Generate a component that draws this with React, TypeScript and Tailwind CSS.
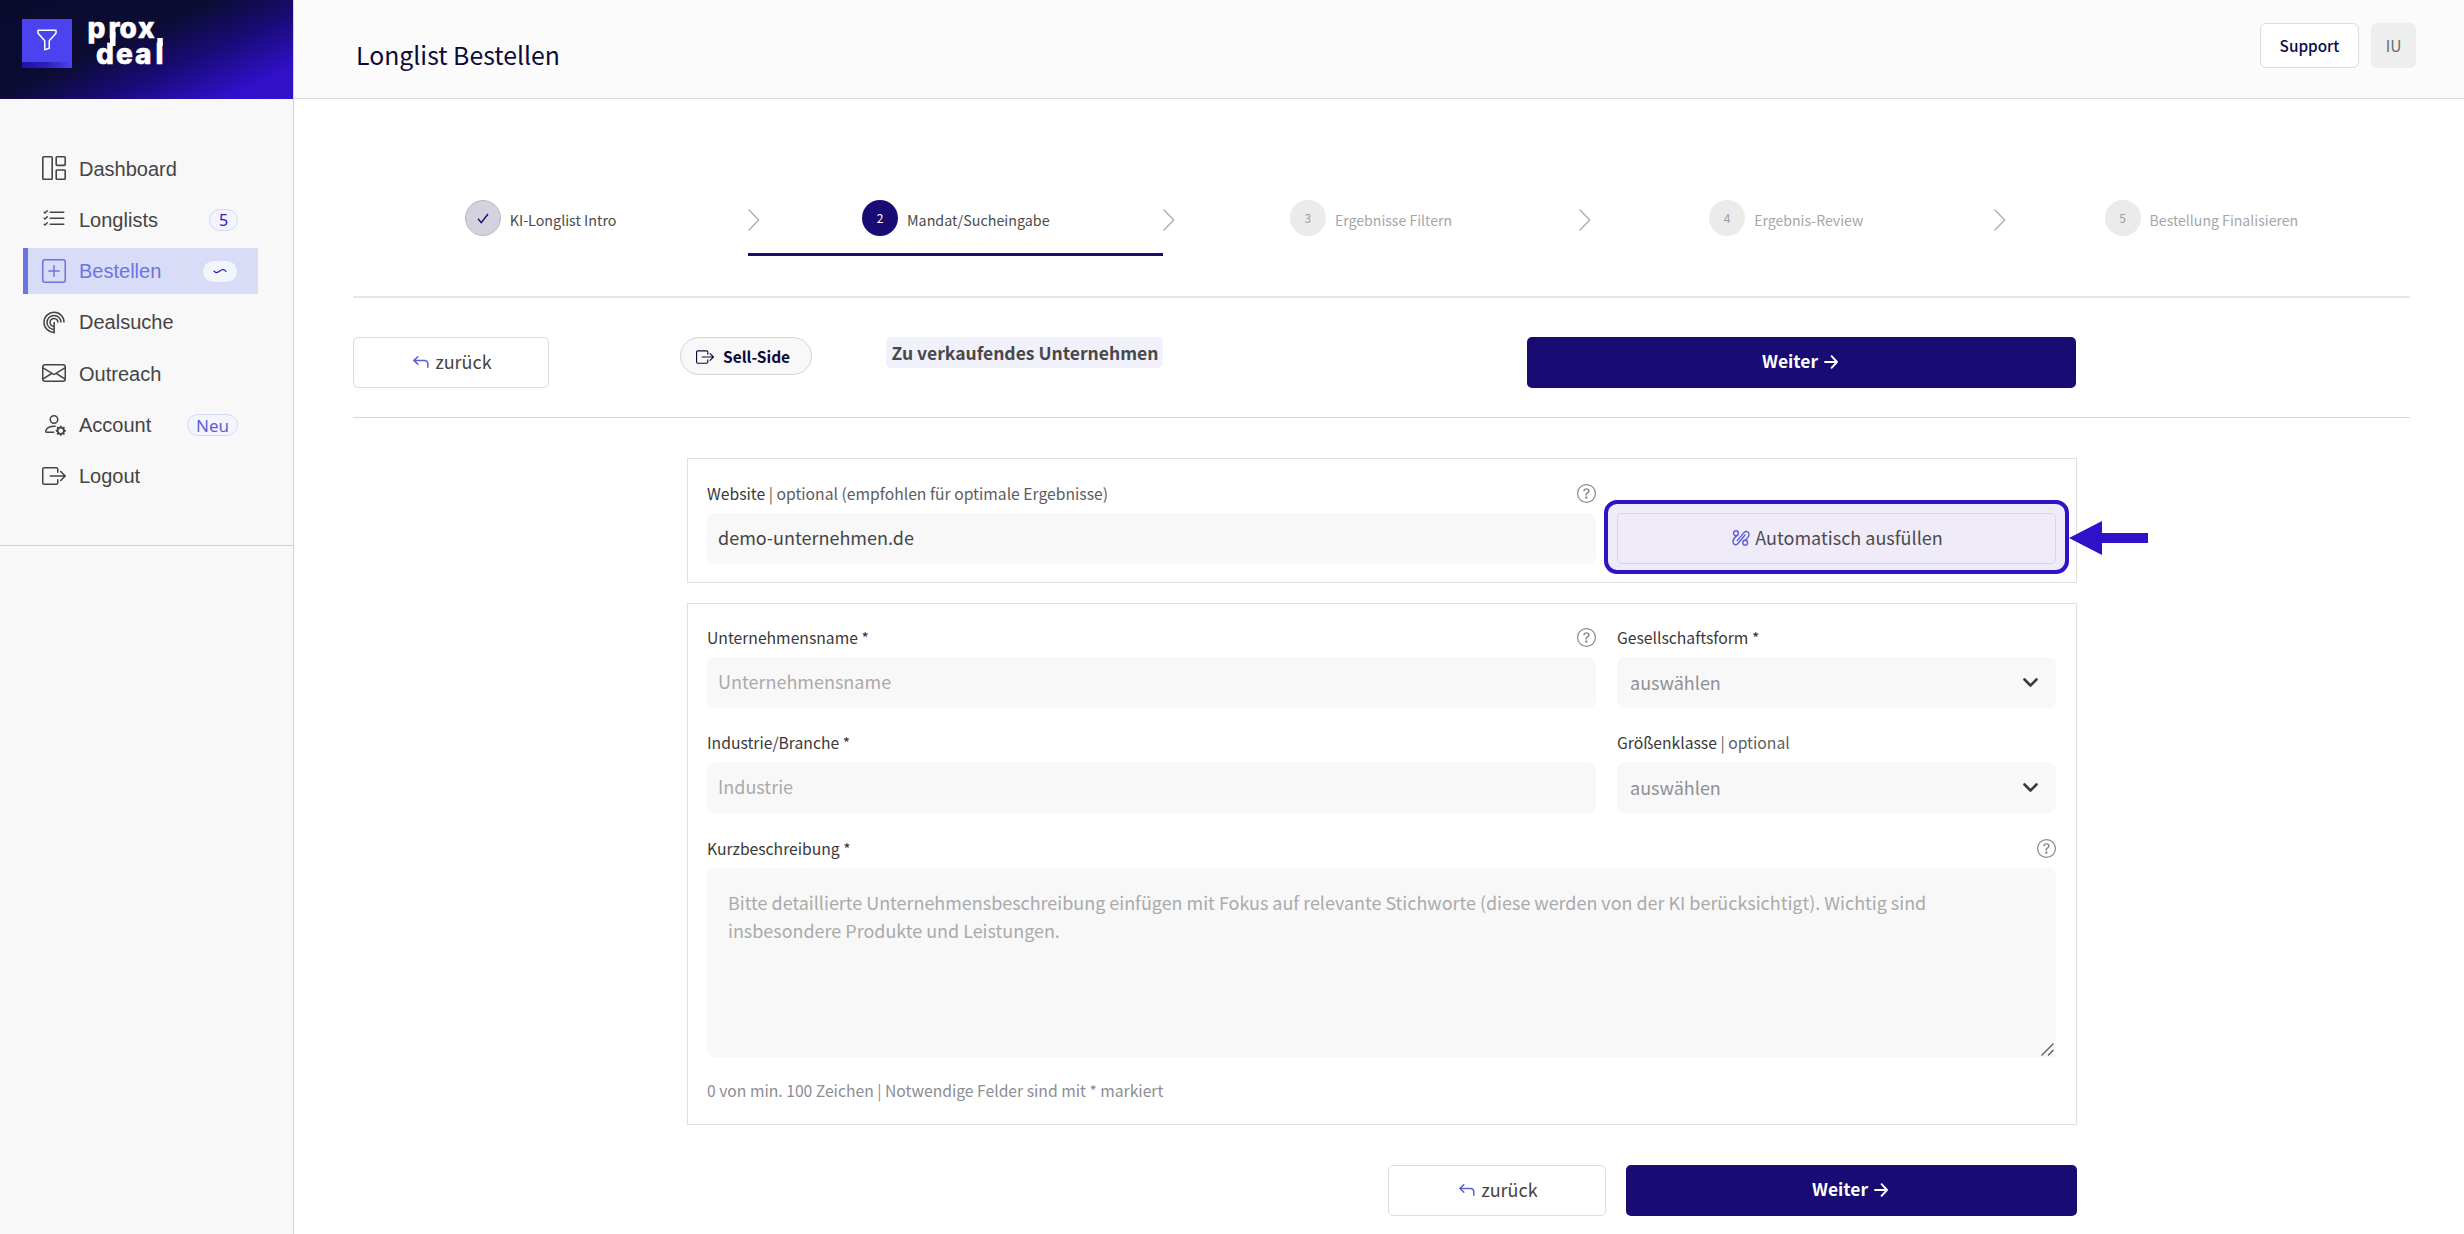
import type { ReactNode } from "react";
import clsx from "clsx";
import {
  BsBoxArrowRight,
  BsEnvelope,
  BsFunnel,
  BsListCheck,
  BsPersonGear,
  BsPlusSquare,
  BsQuestionCircle,
} from "react-icons/bs";

function DashboardIcon() {
  return (
    <svg width="24" height="24" viewBox="0 0 24 24" fill="none" stroke="currentColor" strokeWidth="1.6">
      <rect x="0.8" y="0.8" width="9.4" height="22.4" rx="0.8" />
      <rect x="14.2" y="0.8" width="9" height="8.6" rx="0.8" />
      <rect x="14.2" y="14" width="9" height="9.2" rx="0.8" />
    </svg>
  );
}

function RadarIcon() {
  return (
    <svg width="24" height="24" viewBox="0 0 24 24" fill="none" stroke="currentColor" strokeWidth="1.5">
      <path d="M22 12.5A10 10 0 1 0 12 22.3" />
      <path d="M19 12.5A7 7 0 1 0 12 19.4" />
      <path d="M16 12.5A4 4 0 1 0 12 16.4" />
      <path d="M12.2 12v11.5" />
    </svg>
  );
}

function BackIcon() {
  return (
    <svg width="16" height="12" viewBox="0 0 16 12" fill="none" stroke="#5a5fd6" strokeWidth="1.5" strokeLinecap="round" strokeLinejoin="round">
      <path d="M4.8 0.8 1 4.4l3.8 3.8" />
      <path d="M1.2 4.4h10.3a3.3 3.3 0 0 1 3.3 3.3v3.5" />
    </svg>
  );
}

function NextIcon() {
  return (
    <svg width="14" height="14" viewBox="0 0 14 14" fill="none" stroke="currentColor" strokeWidth="1.9" strokeLinecap="round" strokeLinejoin="round">
      <path d="M1 7h12M7.6 1.2 13 7l-5.4 5.8" />
    </svg>
  );
}

function AutofillIcon() {
  return (
    <svg width="18" height="16" viewBox="0 0 18 16" fill="none" stroke="#5a5fd6" strokeWidth="1.4" strokeLinecap="round">
      <circle cx="4" cy="3.2" r="2.4" />
      <circle cx="13.2" cy="12.7" r="2.4" />
      <path d="M4.800 5.600C2.500 7.500 1 9.500 1 11.800c0 2.900 3 3.900 5 1.700L13 5" />
      <path d="M13 10.200c2.300-1.600 4-3.500 4-5.900 0-2.800-3-3.800-5-1.700L5.200 10.600" />
    </svg>
  );
}

const navItems: { label: string; icon: ReactNode; badge?: string; active?: boolean }[] = [
  { label: "Dashboard", icon: <DashboardIcon /> },
  { label: "Longlists", icon: <BsListCheck size={26} />, badge: "5" },
  { label: "Bestellen", icon: <BsPlusSquare size={24} />, badge: "~", active: true },
  { label: "Dealsuche", icon: <RadarIcon /> },
  { label: "Outreach", icon: <BsEnvelope size={24} /> },
  { label: "Account", icon: <BsPersonGear size={24} />, badge: "Neu" },
  { label: "Logout", icon: <BsBoxArrowRight size={24} /> },
];

function Badge({ text }: { text: string }) {
  if (text === "~") {
    return (
      <span className="ml-auto mr-[21px] mt-[1px] flex h-[21px] w-[34px] items-center justify-center rounded-full bg-[#f3f5fd]">
        <svg width="14" height="6" viewBox="0 0 14 6" fill="none" stroke="#2c14b4" strokeWidth="1.2" strokeLinecap="round">
          <path d="M1 3.2c1.500 1.800 3.500 1.600 5.500 0s4.500-2.200 6.500.2" />
        </svg>
      </span>
    );
  }
  return (
    <span
      className={clsx(
        "ml-auto mr-[20px] mt-[2px] flex h-[22px] items-center justify-center rounded-full border border-[#d3d9f8] bg-[#f2f5fd] font-['Noto_Sans']",
        text === "Neu" ? "w-[51px] text-[17px] text-[#5a5fd6]" : "w-[29px] text-[16px] text-[#3010c8]"
      )}
    >
      {text}
    </span>
  );
}

function Sidebar() {
  return (
    <aside className="flex w-[294px] shrink-0 flex-col border-r border-[#d2d2d4] bg-[#f8f8f8]">
      <div className="flex h-[99px] bg-[linear-gradient(156deg,#0b0b2e_0%,#0c0c34_42%,#180b73_62%,#3010c8_86%,#3512cc_100%)] pl-[22px] pt-[19px]">
        <div className="flex h-[49px] w-[50px] flex-col bg-[#4a43ee]">
          <div className="flex h-[43px] items-center justify-center pb-[1px] pr-[1px] text-white">
            <BsFunnel size={24} />
          </div>
          <div className="h-[6px] bg-gradient-to-r from-[#2410a0] via-[#2f20bc] to-[#4a43ee]" />
        </div>
        <svg
          className="ml-[14px] overflow-visible"
          width="80"
          height="50"
          viewBox="86 19 80 50"
          fill="#fff"
          stroke="#fff"
          strokeWidth="0.6"
          fontFamily="Inter, sans-serif"
          fontWeight="800"
          fontSize="28"
        >
          <text x="87.500 108.500 119.500 138" y="38">prox</text>
          <text x="96 116 135 155.500" y="63.500">deal</text>
          <path stroke="none" d="M110 32h5.500v14H110zM157.300 38h5.500v8h-5.500z" />
        </svg>
      </div>
      <nav className="flex h-[447px] flex-col gap-[5.300px] border-b border-[#d2d2d4] pl-[23px] pr-[35px] pt-[46px] font-['Liberation_Sans'] text-[20px]">
        {navItems.map((item) => (
          <div
            key={item.label}
            className={clsx(
              "flex h-[46px] items-center border-l-[5px] pl-[14px]",
              item.active ? "border-[#6b74e0] bg-[#d9dcf6] text-[#6b74e0]" : "border-transparent text-[#444446]"
            )}
          >
            <span className="flex w-[24px] justify-center">{item.icon}</span>
            <span className="ml-[13px] pt-[1px]">{item.label}</span>
            {item.badge && <Badge text={item.badge} />}
          </div>
        ))}
      </nav>
    </aside>
  );
}

const steps = [
  { label: "KI-Longlist Intro", state: "done" },
  { label: "Mandat/Sucheingabe", state: "current" },
  { label: "Ergebnisse Filtern", state: "open" },
  { label: "Ergebnis-Review", state: "open" },
  { label: "Bestellung Finalisieren", state: "open" },
];

function Stepper() {
  return (
    <div className="ml-[39px] mt-[101px] grid w-[2076px] grid-cols-5">
      {steps.map((step, i) => (
        <div
          key={step.label}
          className={clsx(
            "relative flex h-[56px] items-start justify-center gap-[9px] border-b-[3px]",
            step.state === "current" ? "border-[#180b73]" : "border-transparent"
          )}
        >
          {i > 0 && (
            <svg className="absolute left-0 top-[9px]" width="12" height="22" viewBox="0 0 12 22" fill="none" stroke="#a9a9ab" strokeWidth="1.2">
              <path d="M0.500 0.500 10.800 11 0.500 21.500" />
            </svg>
          )}
          <span
            className={clsx(
              "flex size-[36px] items-center justify-center rounded-full text-[12px]",
              step.state === "done" && "border border-[#b9b9c0] bg-[#d3d2de]",
              step.state === "current" && "bg-[#180b73] text-white",
              step.state === "open" && "bg-[#ebebeb] text-[#9c9c9e]"
            )}
          >
            {step.state === "done" ? (
              <svg width="12" height="11" viewBox="0 0 12 11" fill="none" stroke="#180b73" strokeWidth="1.4">
                <path d="M1 5.800 4.300 9.600 11 1" />
              </svg>
            ) : (
              i + 1
            )}
          </span>
          <span className={clsx("pt-[2px] leading-[36px]", step.state === "open" ? "text-[14.100px] text-[#a6a6a8]" : "text-[14.300px] text-[#4a4a4c]")}>
            {step.label}
          </span>
        </div>
      ))}
    </div>
  );
}

function BackButton({ className }: { className: string }) {
  return (
    <button className={clsx("flex h-[51px] items-center justify-center gap-[6px] rounded-[5px] border border-[#dcdcde] bg-white pb-[2px] pl-[3px] text-[18px] text-[#444446]", className)}>
      <BackIcon />
      zurück
    </button>
  );
}

function NextButton({ className }: { className: string }) {
  return (
    <button className={clsx("flex h-[51px] items-center justify-center gap-[6px] rounded-[5px] bg-[#180b73] pb-[2px] pr-[3px] text-[17.400px] font-bold text-white", className)}>
      Weiter
      <NextIcon />
    </button>
  );
}

function Field({ label, hint, help, children }: { label: string; hint?: string; help?: boolean; children: ReactNode }) {
  return (
    <div className="flex flex-col gap-[10px]">
      <div className="flex h-[19px] items-start justify-between text-[15.700px] leading-[19px]">
        <span className="text-[#39393b]">
          {label}
          {hint && <span className="text-[#5c5c60]"> | {hint}</span>}
        </span>
        {help && <BsQuestionCircle size={19} className="text-[#85858c]" />}
      </div>
      {children}
    </div>
  );
}

function Input({ value, placeholder }: { value?: string; placeholder?: string }) {
  return (
    <input
      defaultValue={value}
      placeholder={placeholder}
      className="h-[51px] w-full rounded-[8px] bg-[#f8f8f8] pb-[3px] pl-[11px] text-[18px] text-[#444446] placeholder:text-[#aaaaab]"
    />
  );
}

function Select() {
  return (
    <div className="flex h-[51px] items-center justify-between rounded-[8px] bg-[#f8f8f8] pb-[1px] pl-[13px] pr-[18px] text-[18px] text-[#8f8f96]">
      auswählen
      <svg width="15" height="9" viewBox="0 0 15 9" fill="none" stroke="#3a3a3c" strokeWidth="2.600" strokeLinecap="round" strokeLinejoin="round">
        <path d="M1.500 1.500l6 6 6-6" />
      </svg>
    </div>
  );
}

export default function App() {
  return (
    <div className="flex h-[1234px] w-[2464px] overflow-hidden bg-white font-['Noto_Sans_CJK_SC','Noto_Sans',sans-serif]">
      <Sidebar />
      <div className="flex min-w-0 flex-1 flex-col">
        <header className="flex h-[99px] shrink-0 items-start border-b border-[#d8d8da] bg-[#fbfbfb] pl-[62px] pr-[48px]">
          <h1 className="mt-[36px] text-[24.800px] leading-[36px] text-[#0b0b3b]">Longlist Bestellen</h1>
          <button className="ml-auto mt-[23px] h-[45px] w-[99px] rounded-[6px] border border-[#dcdcde] bg-white text-[15.300px] font-medium text-[#0b0b4b]">
            Support
          </button>
          <div className="ml-[12px] mt-[23px] flex h-[45px] w-[45px] items-center justify-center rounded-[6px] bg-[#eeeeee] text-[15.500px] text-[#6c6c6e]">
            IU
          </div>
        </header>

        <main className="flex flex-col">
          <Stepper />
          <div className="ml-[59px] mr-[54px] mt-[40px] h-[2px] bg-[#e6e6e7]" />

          <div className="ml-[59px] mt-[39px] flex h-[51px] items-start">
            <BackButton className="w-[196px]" />
            <div className="ml-[131px] flex h-[38px] w-[132px] items-center gap-[9px] rounded-full border border-[#d4d4d6] bg-[#f8f8f8] pl-[15px] pt-[1px] text-[15.500px] font-bold text-[#0b0b3b]">
              <BsBoxArrowRight size={18} />
              Sell-Side
            </div>
            <div className="ml-[74px] flex h-[31px] w-[277px] items-center justify-center rounded-[5px] bg-[#f0f1fb] pl-[1px] pt-[2px] text-[17.500px] font-bold text-[#48484a]">
              Zu verkaufendes Unternehmen
            </div>
            <NextButton className="ml-[364px] w-[549px]" />
          </div>
          <div className="ml-[59px] mr-[54px] mt-[29px] h-px bg-[#d6d6d8]" />

          <div className="ml-[393px] mt-[40px] flex w-[1390px] flex-col">
            <section className="grid h-[125px] grid-cols-[889px_439px] gap-x-[21px] border border-[#e0e0e2] pl-[19px] pt-[25px]">
              <Field label="Website" hint="optional (empfohlen für optimale Ergebnisse)" help>
                <Input value="demo-unternehmen.de" />
              </Field>
              <div className="relative mt-[29px] h-[51px]">
                <div className="absolute -left-[13px] -top-[13px] h-[74px] w-[465px] rounded-[13px] border-4 border-[#3010c8] bg-[#f0ebf9]" />
                <button className="relative flex h-[51px] w-full items-center justify-center gap-[5px] rounded-[5px] border border-[#d8d6dc] pb-[2px] pl-[2px] text-[18px] text-[#4c4a4e]">
                  <AutofillIcon />
                  Automatisch ausfüllen
                </button>
                <svg className="absolute left-[452px] top-[8px]" width="79" height="34" viewBox="0 0 79 34" fill="#3010c8">
                  <path d="M0 17 33 0v12h46v10H33v12z" />
                </svg>
              </div>
            </section>

            <section className="mt-[20px] flex h-[522px] flex-col border border-[#e0e0e2] pl-[19px] pr-[20px] pt-[24px]">
              <div className="grid grid-cols-[889px_439px] gap-x-[21px] gap-y-[25px]">
                <Field label="Unternehmensname *" help>
                  <Input placeholder="Unternehmensname" />
                </Field>
                <Field label="Gesellschaftsform *">
                  <Select />
                </Field>
                <Field label="Industrie/Branche *">
                  <Input placeholder="Industrie" />
                </Field>
                <Field label="Größenklasse" hint="optional">
                  <Select />
                </Field>
              </div>
              <div className="mt-[26px]">
                <Field label="Kurzbeschreibung *" help>
                  <div className="relative h-[189px] rounded-[8px] rounded-br-none bg-[#f8f8f8] pl-[21px] pt-[20px] text-[17.940px] leading-[28px] text-[#aaaaab]">
                    Bitte detaillierte Unternehmensbeschreibung einfügen mit Fokus auf relevante Stichworte (diese werden von der KI berücksichtigt). Wichtig sind
                    <br />
                    insbesondere Produkte und Leistungen.
                    <svg className="absolute bottom-[1px] right-[2px]" width="13" height="13" viewBox="0 0 13 13" stroke="#5a5a5c" strokeWidth="1.300">
                      <path d="M0.500 12.500l12-12M7 12.500l5.500-5.500" />
                    </svg>
                  </div>
                </Field>
              </div>
              <p className="mt-[24px] text-[15.700px] leading-[20px] text-[#8c8c94]">
                0 von min. 100 Zeichen | Notwendige Felder sind mit * markiert
              </p>
            </section>

            <div className="mt-[40px] flex justify-end gap-[20px]">
              <BackButton className="w-[218px]" />
              <NextButton className="w-[451px]" />
            </div>
          </div>
        </main>
      </div>
    </div>
  );
}
